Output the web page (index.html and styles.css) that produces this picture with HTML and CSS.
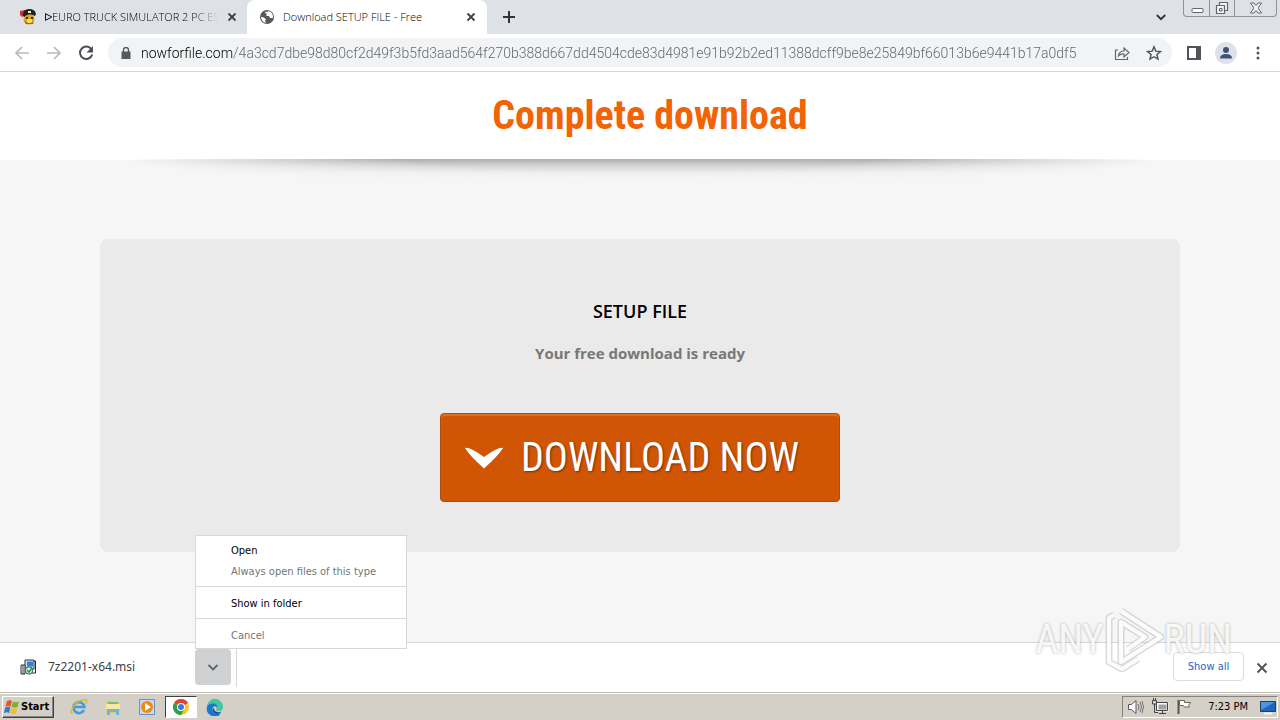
FILE: index.html
```html
<!DOCTYPE html>
<html lang="en">
<head>
<meta charset="utf-8">
<title>Download SETUP FILE - Free</title>
<link rel="stylesheet" href="styles.css">
</head>
<body>
<div class="desktop">
  <header class="tabstrip">
    <div class="tab">
      <svg class="icon16" viewBox="0 0 16 16"><path d="M0 2l5-1 1 5-4 2-2-2z" fill="#c8323c"/><circle cx="9" cy="10" r="5.5" fill="#dca51c"/><path d="M7 10h5v3l-2.500 2L7 13z" fill="#f7de58"/><path d="M3 6Q3 0 9 0t7 5l-1 2Q9 3 4 8z" fill="#251c1c"/><path d="M8 2h3v2H8z" fill="#eee"/><path d="M6 8h2v2H6zm5 0h2v2h-2z" fill="#302414"/><path d="M4 12l2 3h7l1-2-3 1H8z" fill="#a8611b"/></svg>
      <span class="tab-title fade">ᐅEURO TRUCK SIMULATOR 2 PC ES</span>
      <button class="tab-close" aria-label="Close tab"><svg class="icon10" viewBox="0 0 10 10"><path d="M1.500 1.500l7 7m0-7l-7 7" stroke="#3c4043" stroke-width="1.800"/></svg></button>
    </div>
    <div class="tab active">
      <svg class="icon16" viewBox="0 0 16 16"><circle cx="8" cy="8" r="7" fill="#55585c"/><path d="M2 8l3 .5 2 2-1 1 1 2.500Q2.500 13 2 8zM7 2.300L6 4l2 1-1 2 3 0 1 2 3 0Q14.500 3 9 2l-.5 1.500z" fill="#fff"/></svg>
      <span class="tab-title">Download SETUP FILE - Free</span>
      <button class="tab-close" aria-label="Close tab"><svg class="icon10" viewBox="0 0 10 10"><path d="M1.500 1.500l7 7m0-7l-7 7" stroke="#3c4043" stroke-width="1.800"/></svg></button>
    </div>
    <button class="new-tab" aria-label="New tab"><svg class="icon12" viewBox="0 0 12 12"><path d="M6 0v12M0 6h12" stroke="#303338" stroke-width="2"/></svg></button>
    <button class="tab-search" aria-label="Search tabs"><svg class="icon10" viewBox="0 0 10 10"><path d="M.8 3L5 7.200 9.200 3" fill="none" stroke="#303338" stroke-width="1.800"/></svg></button>
    <div class="window-buttons">
      <button aria-label="Minimize"><svg class="icon16" viewBox="0 0 16 16"><rect x="3" y="8.500" width="11" height="4" rx="1" fill="#fff" stroke="#62666e"/></svg></button>
      <button aria-label="Restore"><svg class="icon16" viewBox="0 0 16 16"><path d="M5.500 5V2.500h8v8H11M2.500 5.500h8v8h-8z" fill="#f4f5f7" stroke="#62666e" stroke-width="1.200"/><path d="M5.500 8.500h2.500v2.500H5.500z" fill="#dee1e6" stroke="#62666e"/></svg></button>
      <button class="wide" aria-label="Close"><svg class="icon16" viewBox="0 0 16 16"><path d="M2.500 3h3.500L8 5.500 10 3h3.500L10 8l3.500 5H10L8 10.500 6 13H2.500L6 8z" fill="#f4f5f7" stroke="#62666e"/></svg></button>
    </div>
  </header>

  <nav class="toolbar">
    <button aria-label="Back"><svg class="icon16" viewBox="0 0 16 16"><path d="M15 8H2M8 2L2 8l6 6" fill="none" stroke="#b9bbbe" stroke-width="1.700"/></svg></button>
    <button aria-label="Forward"><svg class="icon16" viewBox="0 0 16 16"><path d="M1 8h13M8 2l6 6-6 6" fill="none" stroke="#b9bbbe" stroke-width="1.700"/></svg></button>
    <button aria-label="Reload"><svg class="icon16" viewBox="0 0 16 16"><path d="M13.500 4.500A6.200 6.200 0 1 0 14.200 9.500" fill="none" stroke="#4d5156" stroke-width="2"/><path d="M15 1v6.500H8.500z" fill="#4d5156"/></svg></button>
    <div class="omnibox">
      <svg class="icon12" viewBox="0 0 12 12"><path d="M1.500 4.500h9V12h-9z" fill="#55585c"/><path d="M3.500 5V3a2.500 2.500 0 0 1 5 0v2" fill="none" stroke="#55585c" stroke-width="1.400"/></svg>
      <input class="url" type="text" aria-label="Address" value="nowforfile.com/4a3cd7dbe98d80cf2d49f3b5fd3aad564f270b388d667dd4504cde83d4981e91b92b2ed11388dcff9be8e25849bf66013b6e9441b17a0df5">
      <button aria-label="Share"><svg class="icon16" viewBox="0 0 16 16"><path d="M4 5H1.500v9.500h12V12M4.500 11q.5-5 5.500-5V3l5 4.500-5 4.500V9q-3.500-.5-5.500 2z" fill="none" stroke="#5f6368" stroke-width="1.200"/></svg></button>
      <button aria-label="Bookmark"><svg class="icon16" viewBox="0 0 16 16"><path d="M8 1.800l1.800 4.300 4.700.4-3.600 3 1.100 4.600L8 11.700l-4 2.400 1.100-4.600-3.600-3 4.700-.4z" fill="none" stroke="#4d5156" stroke-width="1.400"/></svg></button>
    </div>
    <button aria-label="Side panel"><svg class="icon16" viewBox="0 0 16 16"><path d="M2 2h12v12H2z" fill="none" stroke="#505458" stroke-width="2"/><path d="M10 2h5v12h-5z" fill="#505458"/></svg></button>
    <button class="avatar" aria-label="Profile"><svg class="icon16" viewBox="0 0 16 16"><circle cx="8" cy="5" r="3" fill="#40527a"/><path d="M2 13.500q0-4.500 6-4.500t6 4.500z" fill="#40527a"/></svg></button>
    <button aria-label="Menu"><svg class="icon16" viewBox="0 0 16 16"><g fill="#505458"><circle cx="8" cy="3" r="1.500"/><circle cx="8" cy="8" r="1.500"/><circle cx="8" cy="13" r="1.500"/></g></svg></button>
  </nav>

  <main class="page">
    <div class="banner"><h1>Complete download</h1></div>
    <div class="banner-shadow"></div>
    <section class="card">
      <h2>SETUP FILE</h2>
      <p>Your free download is ready</p>
      <button class="download"><svg class="check" viewBox="0 0 40 22"><path d="M1 1Q5-.5 20 10 35-.5 39 1 35 8 20 21.500 5 8 1 1z" fill="#fff"/></svg><span>DOWNLOAD NOW</span></button>
    </section>
  </main>

  <footer class="shelf">
    <button class="file"><svg class="icon16" viewBox="0 0 16 16"><path d="M5 1h9v9H5z" fill="#d7e3ef" stroke="#273340"/><path d="M7 2.500h6v5H7z" fill="#2884dc"/><path d="M14 2h1.500v12H12" fill="none" stroke="#202830"/><path d="M1 6h4v9H1z" fill="#eee" stroke="#273340"/><path d="M3 6v9" stroke="#445"/><circle cx="9" cy="11.500" r="3.700" fill="#d9eee0" stroke="#31543e"/><path d="M7 11l2 2 3-4" fill="none" stroke="#219450" stroke-width="1.500"/></svg><span>7z2201-x64.msi</span></button>
    <div class="more">
      <button class="more-button" aria-label="Download options"><svg class="icon12" viewBox="0 0 12 12"><path d="M1.500 4L6 8.500 10.500 4" fill="none" stroke="#5f6368" stroke-width="1.800"/></svg></button>
      <div class="menu" role="menu">
        <button role="menuitem">Open</button>
        <button role="menuitem" class="muted">Always open files of this type</button>
        <hr>
        <button role="menuitem">Show in folder</button>
        <hr>
        <button role="menuitem" class="muted">Cancel</button>
      </div>
    </div>
    <div class="divider"></div>
    <button class="show-all">Show all</button>
    <button class="shelf-close" aria-label="Close downloads"><svg class="icon12" viewBox="0 0 12 12"><path d="M1.500 1.500l9 9m0-9l-9 9" stroke="#505458" stroke-width="1.900"/></svg></button>
    <div class="watermark">
      <span>ANY</span>
      <svg class="play" viewBox="0 0 60 64"><g fill="none" stroke-linejoin="round"><path d="M17 3L57 29 17 54V14l24 15-17 12M10 7L5 10v44l13 7 16-10" stroke="#b7b7b7" stroke-opacity=".5" stroke-width="7"/><path d="M17 3L57 29 17 54V14l24 15-17 12M10 7L5 10v44l13 7 16-10" stroke="#fff" stroke-opacity=".9" stroke-width="4"/></g></svg>
      <span>RUN</span>
    </div>
  </footer>

  <div class="taskbar">
    <button class="start"><svg class="icon16" viewBox="0 0 16 16"><path d="M3 2q3-1.500 5 0L6.500 7.500q-2-1-5 0z" fill="#e9542b"/><path d="M9 2.500q3 1.500 6 0l-1.500 5.500q-3 1-6 0z" fill="#75b52e"/><path d="M1.300 8.500q3-1.500 5 0L5 14q-2-1.500-5 0z" fill="#3577ca"/><path d="M7.300 9q3 1.500 6 0L12 14.500q-3 1-6 0z" fill="#f5bd2d"/></svg><span>Start</span></button>
    <div class="quick">
      <button aria-label="Internet Explorer"><svg class="icon18" viewBox="0 0 18 18"><path d="M14 12A5.500 5.500 0 1 1 14.500 9H5" fill="none" stroke="#3e9fdd" stroke-width="2.600"/><path d="M3 15Q-1 16 3 9T15 1.500q3 0 1 4" fill="none" stroke="#e3b72c" stroke-width="1.400"/></svg></button>
      <button aria-label="File Explorer"><svg class="icon18" viewBox="0 0 18 18"><path d="M2 3h5l1 2h8v10H2z" fill="#e7c766"/><path d="M4 4h10v3H4z" fill="#80bd62"/><path d="M2 6h14v5H2z" fill="#f8e7a2"/><path d="M3 17v-6h12v6h-3v-3H6v3z" fill="#72b5dc"/></svg></button>
      <button aria-label="Media Player"><svg class="icon18" viewBox="0 0 18 18"><path d="M1.500 1.500h15v15h-15z" fill="#c2dbef" stroke="#6692be"/><circle cx="9" cy="9" r="6" fill="#f18715"/><path d="M7 5l6 4-6 4z" fill="#fff"/></svg></button>
      <button class="pressed" aria-label="Chrome"><svg class="icon18" viewBox="0 0 18 18"><circle cx="9" cy="9" r="8" fill="#f7c52d"/><path d="M9 9L2.070 5A8 8 0 0 1 15.930 5z" fill="#df4431"/><path d="M9 9L2.070 5A8 8 0 0 0 9 17l4-7z" fill="#2da04e"/><circle cx="9" cy="9" r="4" fill="#fff"/><circle cx="9" cy="9" r="3" fill="#397be4"/></svg></button>
      <button aria-label="Edge"><svg class="icon18" viewBox="0 0 18 18"><path d="M1 8.500A8 8 0 0 1 17 9q0 4-4 4-3 0-3-1.500 1.500-1.500.5-3.500Q8 4 1 8.500z" fill="#45c6a0"/><path d="M1 8.500Q3.500 5 8 5.500q4 1 3 4.500-1-2.500-3-1.500-2 1-1.500 4 1 3 5 3.500h3A8 8 0 0 1 1 8.500z" fill="#1878cc"/><path d="M6.500 12q1 4 5 4 2.500 0 4-2.500-4 1.500-6.500-.5-1-1-1-3-1.500.5-1.500 2z" fill="#10529c"/></svg></button>
    </div>
    <div class="tray">
      <svg class="icon18" viewBox="0 0 18 18"><path d="M1.500 6.500h3L9 2.500v13l-4.500-4h-3z" fill="#fff" stroke="#55585c"/><path d="M11 6q2 3 0 6m2-8q3 5 0 10m2-11q3 6 0 12" fill="none" stroke="#707376"/></svg>
      <svg class="icon18" viewBox="0 0 18 18"><path d="M6.500 5.500h10v7h-10z" fill="#9da3a5" stroke="#fff" stroke-width="2"/><path d="M5.500 4.500h11v8h-11zM8 15.500h7M11.500 13v2M1.500 2.500h4V6h-4zM3.500 6v8.500H7M2.500 0v2m2-2v2" fill="none" stroke="#444"/></svg>
      <svg class="icon18" viewBox="0 0 18 18"><path d="M3.500 2v14" stroke="#555" stroke-width="2"/><path d="M4.500 2.500h5v2h6l-2 3 1 1.500h-5l-1-1.500h-4z" fill="#fff" stroke="#666"/></svg>
      <time>7:23 PM</time>
      <svg class="icon18" viewBox="0 0 18 18"><path d="M1.500 3.500h15v10h-15z" fill="#1d65bd" stroke="#203c67"/><path d="M2 4h14L2 12z" fill="#4a96e2"/><path d="M5 15.500h8" stroke="#f4f4f4" stroke-width="2"/></svg>
    </div>
  </div>
</div>
</body>
</html>
```

FILE: styles.css
```css
* { box-sizing: border-box; }
body { margin: 0; font-family: "DejaVu Sans Condensed", "Noto Sans", sans-serif; font-size: 11px; color: #202124; }
button { font: inherit; color: inherit; border: 0; background: none; padding: 0; }
svg { display: block; flex: none; }
.icon10 { width: 10px; height: 10px; }
.icon12 { width: 12px; height: 12px; }
.icon16 { width: 16px; height: 16px; }
.icon18 { width: 18px; height: 18px; }
.desktop { min-height: 100vh; display: flex; flex-direction: column; background: #f6f6f6; }

.tabstrip { display: flex; background: #dee1e6; height: 34px; }
.tab { width: 240px; display: flex; align-items: center; gap: 8px; padding: 0 11px 0 12px; color: #000; font-family: "Open Sans", sans-serif; }
.tab:first-child { width: 247px; padding-left: 20px; padding-right: 10px; }
.tab.active { background: #fff; border-radius: 8px 8px 0 0; }
.tab-title { flex: 1; min-width: 0; padding-bottom: 1px; white-space: nowrap; font-weight: 300; }
.fade { mask-image: linear-gradient(to right, #000 85%, transparent); }
.new-tab { width: 44px; display: grid; place-items: center; }
.tab-search { margin-left: auto; padding: 0 17px; }
.window-buttons { display: flex; height: 17px; margin-right: 3px; border: 1px solid #8e929a; border-top: 0; border-radius: 0 0 4px 4px; overflow: hidden; }
.window-buttons button { width: 25px; display: grid; place-items: center; }
.window-buttons button + button { border-left: 1px solid #8e929a; }
.window-buttons .wide { width: 42px; }

.toolbar { display: flex; align-items: center; gap: 16px; padding: 4px 14px; height: 38px; background: #fff; border-bottom: 1px solid #d5d7d9; }
.omnibox { flex: 1; display: flex; align-items: center; gap: 16px; height: 29px; margin: 0 -2px; padding: 0 10px 0 12px; border-radius: 15px; background: #f1f3f4; }
.url { flex: 1; min-width: 0; margin: 0 -8px 0 -7px; padding: 0; border: 0; font-family: Roboto, sans-serif; font-size: 14px; font-weight: 300; color: transparent; background: linear-gradient(to right, #000 92px, #5f6368 92px); background-clip: text; }
.avatar { width: 22px; height: 22px; margin: 0 -3px; display: grid; place-items: center; border-radius: 50%; background: #dde2e9; }

.page { flex: 1; display: flex; flex-direction: column; align-items: center; }
.banner { width: 100%; background: #fff; text-align: center; padding: 20px; }
.banner h1 { margin: 0; padding-left: 20px; font: 700 40px/48px "Roboto Condensed", "Liberation Sans Narrow", sans-serif; color: #f26303; }
.banner-shadow { width: 80%; height: 20px; margin-top: -1px; background: linear-gradient(#adadad, #d6d6d6 35%, #ececec 70%, #f6f6f6); mask-image: radial-gradient(ellipse 50% 130% at 50% 0, #000 45%, transparent); }
.card { width: calc(100% - 200px); margin: 60px 0 90px; padding: 60px 20px 50px; border-radius: 8px; background: #eaeaea; display: flex; flex-direction: column; align-items: center; font-family: "Open Sans", sans-serif; }
.card h2 { margin: 0; font-size: 18px; line-height: 24px; font-weight: 600; color: #000; }
.card p { margin: 19px 0 49px; font-size: 15px; line-height: 22px; font-weight: 700; color: #777; }
.download { width: 400px; height: 89px; display: flex; align-items: center; gap: 17px; padding: 0 23px; border: 1px solid #a94d12; border-radius: 4px; background: #d05605; box-shadow: inset 0 2px 1px #de7328; color: #fff; font: 400 40px/48px "Roboto Condensed", "Liberation Sans Narrow", sans-serif; text-shadow: 1px 1px 2px #713008; white-space: nowrap; }
.check { width: 40px; height: 22px; }

.shelf { position: relative; display: flex; height: 50px; background: #fff; border-top: 1px solid #d5d7d9; }
.file { width: 195px; display: flex; align-items: center; gap: 12px; padding: 0 0 2px 20px; font-size: 12px; font-family: "Noto Sans", sans-serif; color: #3c4043; }
.more { position: relative; padding-top: 6px; }
.more-button { width: 36px; height: 36px; border-radius: 4px; background: #d0d1d3; display: grid; place-items: center; }
.menu { position: absolute; left: 0; bottom: 43px; width: 212px; padding: 4px 0 2px; display: flex; flex-direction: column; background: #fff; border: 1px solid #d5d7d9; }
.menu button { height: 21px; padding-left: 35px; text-align: left; white-space: nowrap; color: #000; }
.menu .muted { color: #747679; }
.menu hr { width: 100%; margin: 4px 0 6px; border: 0; border-top: 1px solid #d9d9d9; }
.divider { width: 1px; height: 44px; margin-left: 5px; background: #d5d7d9; }
.show-all { width: 71px; height: 29px; margin: 9px 12px 0 auto; border: 1px solid #d9dce0; border-radius: 4px; color: #1a66c8; }
.shelf-close { width: 12px; margin-right: 12px; }
.watermark { position: absolute; right: 48px; bottom: 20px; display: flex; align-items: center; pointer-events: none; color: rgba(255, 255, 255, .9); font: 400 40px/40px "Roboto Condensed", "Liberation Sans Narrow", sans-serif; text-shadow: 0 0 3px rgba(100, 100, 100, .5); }
.play { width: 60px; height: 64px; }

.taskbar { display: flex; align-items: center; height: 28px; padding: 2px; border-top: 1px solid #bbb9b4; box-shadow: inset 0 1px #fff; background: #d4cfc7; }
.start { width: 52px; height: 22px; display: flex; align-items: center; gap: 1px; padding-left: 1px; border: 1px solid; border-color: #fff #404040 #404040 #fff; box-shadow: inset -1px -1px #888; font-weight: 700; color: #000; }
.quick { display: flex; margin-left: 9px; gap: 2px; }
.quick button { width: 32px; height: 22px; display: grid; place-items: center; }
.quick .pressed { background: #fff; border: 1px solid; border-color: #404040 #fff #fff #404040; }
.tray { display: flex; align-items: center; gap: 6px; height: 22px; margin-left: auto; padding: 0 0 0 4px; border: 1px solid; border-color: #85817c #fff #fff #85817c; }
.tray time { margin: 0 5px 0 9px; color: #000; }
```
